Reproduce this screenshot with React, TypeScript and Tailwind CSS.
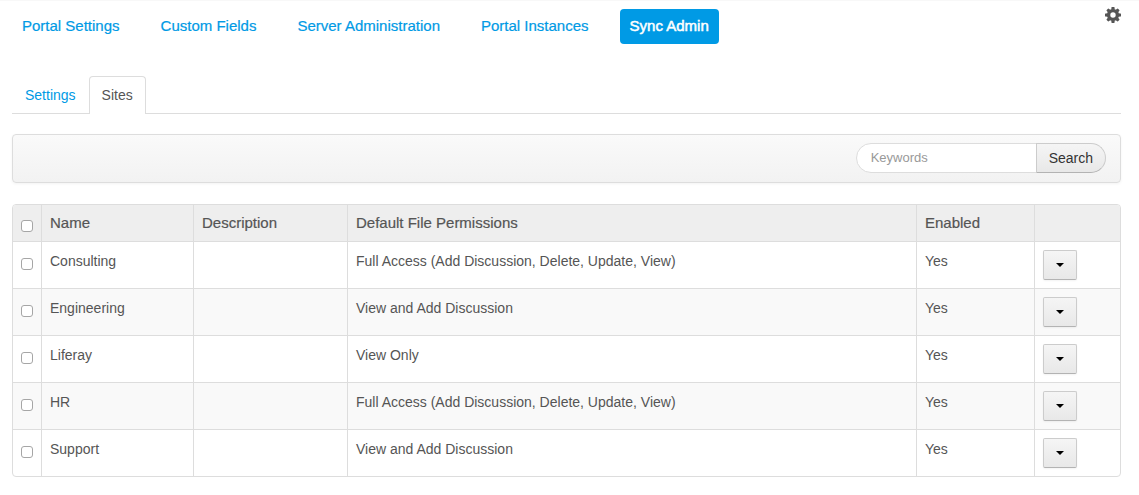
const navItems = ['Portal Settings', 'Custom Fields', 'Server Administration', 'Portal Instances', 'Sync Admin'];

const FULL = 'Full Access (Add Discussion, Delete, Update, View)';

const sites = [
  { name: 'Consulting', permissions: FULL },
  { name: 'Engineering', permissions: 'View and Add Discussion' },
  { name: 'Liferay', permissions: 'View Only' },
  { name: 'HR', permissions: FULL },
  { name: 'Support', permissions: 'View and Add Discussion' },
];

const toothAngles = [0, 45, 90, 135, 180, 225, 270, 315];

function Gear() {
  return (
    <svg viewBox="0 0 16 16" className="size-4" aria-hidden="true">
      <circle cx="8" cy="8" r="4.4" fill="none" stroke="#555555" strokeWidth="3.4" />
      {toothAngles.map((angle) => (
        <path key={angle} d="M6.2 2.8 6.5 0.5Q6.6 0 7.1 0H8.9Q9.4 0 9.5 0.5L9.8 2.8Z" fill="#555555" transform={`rotate(${angle} 8 8)`} />
      ))}
    </svg>
  );
}

function Tick({ label }: { label: string }) {
  return (
    <input
      type="checkbox"
      aria-label={label}
      className="mt-[7px] block size-3 appearance-none rounded-[3px] border border-[#a6a6a6] bg-white checked:bg-[#009ae5]"
    />
  );
}

const textCell = 'border-l border-t border-[#dddddd] px-2 pt-[9px] pb-2 align-top';
const headCell = 'border-l border-[#dddddd] p-2 text-left align-top text-[15px] leading-5 font-normal [-webkit-text-stroke:0.2px_#555555]';

export default function App() {
  return (
    <div className="border-t border-[#f8f8f8] bg-white pr-[18px] pb-4 pl-3 font-['Liberation_Sans',Arial,sans-serif] text-[14px] leading-5 text-[#555555]">
      <header className="flex items-start justify-between pt-2">
        <nav aria-label="Control panel" className="flex flex-wrap gap-[21px] text-[15px]">
          {navItems.map((item) => (
            <a
              key={item}
              href="#"
              aria-current={item === 'Sync Admin' ? 'page' : undefined}
              className={
                item === 'Sync Admin'
                  ? 'rounded bg-[#009ae5] px-[10px] pt-1.5 pb-2 leading-[21px] text-white [-webkit-text-stroke:0.5px_white]'
                  : 'rounded px-[10px] pt-1.5 pb-2 leading-[21px] text-[#009ae5] [-webkit-text-stroke:0.2px_#009ae5]'
              }
            >
              {item}
            </a>
          ))}
        </nav>
        <button type="button" aria-label="Configuration" className="-mt-0.5">
          <Gear />
        </button>
      </header>

      <nav aria-label="Sync" className="mt-8 flex border-b border-[#dddddd]">
        <a href="#" className="px-[13px] pt-[9px] pb-2 text-[#009ae5]">Settings</a>
        <a href="#" aria-current="page" className="-mb-px rounded-t border border-b-0 border-[#dddddd] bg-white px-3 pt-2 pb-[9px]">
          Sites
        </a>
      </nav>

      <form
        onSubmit={(e) => e.preventDefault()}
        className="mt-5 flex justify-end rounded-sm border border-[#dddddd] bg-linear-to-b from-[#fafafa] to-[#f2f2f2] pt-2 pr-[14px] pb-[9px] shadow-[0_1px_3px_rgba(0,0,0,0.05)]"
      >
        <input
          type="text"
          aria-label="Keywords"
          placeholder="Keywords"
          className="-mr-px h-[30px] w-[181px] rounded-l-full border border-[#dddddd] bg-white pr-1 pb-0.5 pl-[14px] text-[13px] outline-none placeholder:text-[#999999]"
        />
        <button
          type="submit"
          className="h-[30px] rounded-r-full border border-[#cccccc] border-b-[#b3b3b3] bg-linear-to-b from-[#f5f5f5] to-[#e8e8e8] px-3 text-[14px] text-[#333333]"
        >
          Search
        </button>
      </form>

      <div className="mt-[21px] overflow-hidden rounded border border-[#dddddd]">
        <table className="w-full table-fixed border-separate border-spacing-0">
          <colgroup>
            <col className="w-7" />
            <col className="w-[152px]" />
            <col className="w-[154px]" />
            <col />
            <col className="w-[118px]" />
            <col className="w-[86px]" />
          </colgroup>
          <thead className="bg-[#eeeeee]">
            <tr>
              <th className="p-2 align-top"><Tick label="Select all sites" /></th>
              <th className={headCell}>Name</th>
              <th className={headCell}>Description</th>
              <th className={headCell}>Default File Permissions</th>
              <th className={headCell}>Enabled</th>
              <th className={headCell} aria-label="Actions" />
            </tr>
          </thead>
          <tbody>
            {sites.map((site) => (
              <tr key={site.name} className="even:bg-[#f9f9f9]">
                <td className="border-t border-[#dddddd] px-2 pt-[9px] pb-2 align-top"><Tick label={`Select ${site.name}`} /></td>
                <td className={textCell}>{site.name}</td>
                <td className={textCell} />
                <td className={textCell}>{site.permissions}</td>
                <td className={textCell}>Yes</td>
                <td className="border-l border-t border-[#dddddd] p-2 align-top">
                  <button
                    type="button"
                    aria-label={`Actions for ${site.name}`}
                    className="flex h-[30px] w-[34px] items-center justify-center rounded-[2px] border border-[#cccccc] border-b-[#b3b3b3] bg-linear-to-b from-[#f5f5f5] to-[#e8e8e8] shadow-[0_1px_2px_rgba(0,0,0,0.05)]"
                  >
                    <svg viewBox="0 0 8 4" className="h-1 w-2" aria-hidden="true">
                      <path d="M0 0H8L4 4Z" fill="#000000" />
                    </svg>
                  </button>
                </td>
              </tr>
            ))}
          </tbody>
        </table>
      </div>
    </div>
  );
}
